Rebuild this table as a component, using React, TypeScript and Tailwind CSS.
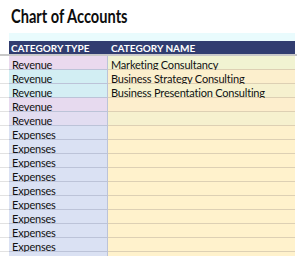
const rows: { type: string; name: string; c1: string; c2: string }[] = [
  { type: 'Revenue', name: 'Marketing Consultancy', c1: 'bg-[#ead9ee]', c2: 'bg-[#f1f3d2]' },
  { type: 'Revenue', name: 'Business Strategy Consulting', c1: 'bg-[#d2eef3]', c2: 'bg-[#fcefcd]' },
  { type: 'Revenue', name: 'Business Presentation Consulting', c1: 'bg-[#d4eef4]', c2: 'bg-[#f6f1cf]' },
  { type: 'Revenue', name: '', c1: 'bg-[#e7daef]', c2: 'bg-[#fdeecd]' },
  { type: 'Revenue', name: '', c1: 'bg-[#e2ddf1]', c2: 'bg-[#f6f1cf]' },
  { type: 'Expenses', name: '', c1: 'bg-[#dae1f3]', c2: 'bg-[#fef1cc]' },
  { type: 'Expenses', name: '', c1: 'bg-[#dae1f3]', c2: 'bg-[#fff2cc]' },
  { type: 'Expenses', name: '', c1: 'bg-[#dae1f3]', c2: 'bg-[#fff2cc]' },
  { type: 'Expenses', name: '', c1: 'bg-[#dae1f3]', c2: 'bg-[#fff2cc]' },
  { type: 'Expenses', name: '', c1: 'bg-[#dae1f3]', c2: 'bg-[#fff2cc]' },
  { type: 'Expenses', name: '', c1: 'bg-[#dae1f3]', c2: 'bg-[#fff2cc]' },
  { type: 'Expenses', name: '', c1: 'bg-[#dae1f3]', c2: 'bg-[#fff2cc]' },
  { type: 'Expenses', name: '', c1: 'bg-[#dae1f3]', c2: 'bg-[#fff2cc]' },
  { type: 'Expenses', name: '', c1: 'bg-[#dae1f3]', c2: 'bg-[#fff2cc]' },
  { type: 'Expenses', name: '', c1: 'bg-[#dae1f3]', c2: 'bg-[#fff2cc]' },
]

export default function App() {
  return (
    <div className="w-[297px] h-[256px] overflow-hidden bg-white font-['Lato',sans-serif] text-[#111]">
      {/* Title */}
      <div className="h-[33px] pl-[11px] pt-[5px]">
        <h1 className="inline-block origin-left scale-x-[0.77] text-[19px] leading-[22px] font-bold whitespace-nowrap text-[#0d0d0d]">Chart of Accounts</h1>
      </div>

      <div className="flex h-[8px]">
        <div className="w-[9px]" />
        <div className="flex-1 bg-[#e9fbfd]" />
        <div className="w-[2px]" />
      </div>

      {/* Header */}
      <div className="flex h-[15px] border-b-2 border-[#c8c8c8]">
        <div className="w-[9px]" />
        <div className="flex flex-1 bg-[#313d70] text-white text-[10px] font-bold leading-[13px]">
          <div className="w-[99px] pl-[2px] pt-[1px]">CATEGORY TYPE</div>
          <div className="flex-1 pl-[3px] pt-[1px]">CATEGORY NAME</div>
        </div>
        <div className="w-[2px]" />
      </div>

      {/* Rows */}
      {rows.map((r, i) => (
        <div key={i} className="flex h-[14px] text-[11px] leading-[12px] tracking-[-0.2px]">
          <div className="w-[9px] border-b border-[#e2e2e2]" />
          <div className={`w-[99px] ${r.c1} border-b border-r border-[#bcc3d8] pl-[3px] pt-[3px]`}>{r.type}</div>
          <div className={`flex-1 ${r.c2} border-b border-[#ddd0b4] pl-[3px] pt-[3px]`}>{r.name}</div>
          <div className="w-[2px]" />
        </div>
      ))}
    </div>
  )
}
